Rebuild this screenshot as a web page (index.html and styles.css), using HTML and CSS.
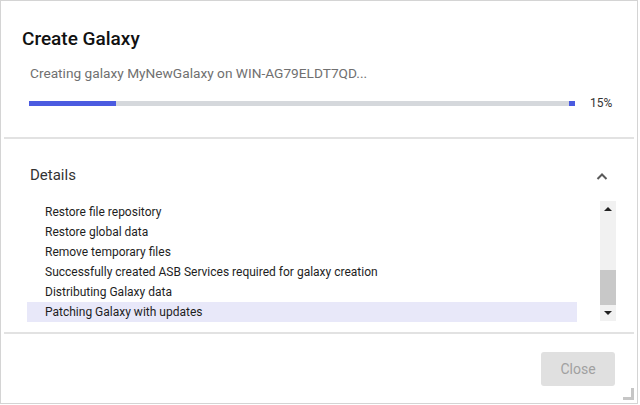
FILE: index.html
```html
<!DOCTYPE html>
<html lang="en">
<head>
    <meta charset="UTF-8">
    <meta name="viewport" content="width=device-width, initial-scale=1.0">
    <title>Create Galaxy</title>
    <link rel="stylesheet" href="styles.css">
</head>
<body>

    <div class="dialog">
        <div class="header">
            <h1>Create Galaxy</h1>
            <p class="status">Creating galaxy MyNewGalaxy on WIN-AG79ELDT7QD...</p>
            <div class="progress-row">
                <div class="progress-bar">
                    <div class="progress" style="width: 16%"></div>
                    <div class="progress-end"></div>
                </div>
                <span class="percent">15%</span>
            </div>
        </div>

        <div class="divider"></div>

        <div class="details">
            <div class="details-head">
                <span>Details</span>
                <svg class="chevron" width="12" height="8" viewBox="0 0 12 8">
                    <path d="M1.5 7 L6 2.5 L10.5 7" fill="none" stroke="#5a5a5a" stroke-width="2"/>
                </svg>
            </div>
            <div class="log-box">
                <ul class="log">
                    <li>Restore file repository</li>
                    <li>Restore global data</li>
                    <li>Remove temporary files</li>
                    <li>Successfully created ASB Services required for galaxy creation</li>
                    <li>Distributing Galaxy data</li>
                    <li class="selected">Patching Galaxy with updates</li>
                </ul>
                <div class="scrollbar">
                    <div class="scroll-btn"><span class="arrow-up"></span></div>
                    <div class="scroll-track"><div class="scroll-thumb"></div></div>
                    <div class="scroll-btn"><span class="arrow-down"></span></div>
                </div>
            </div>
        </div>

        <div class="divider"></div>

        <div class="footer">
            <button class="close-btn" disabled>Close</button>
        </div>

        <div class="grip"></div>
    </div>

</body>
</html>
```

FILE: styles.css
```css
body {
    margin: 0;
    font-family: Roboto, 'Liberation Sans', sans-serif;
    background: white;
}
.dialog {
    position: relative;
    width: 638px;
    height: 404px;
    box-sizing: border-box;
    border: 1px solid #d4d4d4;
    background: white;
}
.header {
    height: 136px;
    padding: 27px 0 0 21px;
    box-sizing: border-box;
}
h1 {
    margin: 0;
    font-size: 19px;
    line-height: 22px;
    font-weight: 500;
    color: #111;
}
.status {
    margin: 15px 0 0 8px;
    font-size: 13.7px;
    line-height: 16px;
    color: #707070;
}
.progress-row {
    display: flex;
    align-items: center;
    height: 16px;
    margin: 14px 0 0 7px;
}
.progress-bar {
    display: flex;
    width: 546px;
    height: 5px;
    background: #d5d8dc;
}
.progress {
    height: 100%;
    background: #4b5be0;
}
.progress-end {
    width: 6px;
    height: 100%;
    margin-left: auto;
    background: #4b5be0;
}
.percent {
    margin-left: 15px;
    font-size: 12px;
    color: #333;
}
.divider {
    height: 2px;
    margin: 0 3px;
    background: #e2e2e2;
}
.details {
    height: 193px;
    padding-top: 27px;
    box-sizing: border-box;
}
.details-head {
    display: flex;
    align-items: center;
    justify-content: space-between;
    height: 18px;
    padding: 0 29px;
    font-size: 15px;
    color: #333;
}
.chevron {
    margin-top: 2px;
}
.log-box {
    display: flex;
    margin: 17px 21px 0 26px;
    height: 121px;
}
.log {
    list-style: none;
    margin: 1px 0 0 0;
    padding: 0;
    width: 550px;
}
.log li {
    height: 20px;
    line-height: 20px;
    padding-left: 18px;
    font-size: 12px;
    color: #1e1e1e;
    white-space: nowrap;
}
.log li.selected {
    background: #e8e8f9;
}
.scrollbar {
    display: flex;
    flex-direction: column;
    width: 16px;
    height: 120px;
    margin-left: auto;
    background: #f1f1f1;
}
.scroll-btn {
    display: flex;
    align-items: center;
    justify-content: center;
    height: 16px;
}
.arrow-up {
    width: 0;
    height: 0;
    border-left: 4px solid transparent;
    border-right: 4px solid transparent;
    border-bottom: 4px solid #222;
}
.arrow-down {
    width: 0;
    height: 0;
    border-left: 4px solid transparent;
    border-right: 4px solid transparent;
    border-top: 4px solid #222;
}
.scroll-track {
    flex: 1;
    display: flex;
    flex-direction: column;
    justify-content: flex-end;
}
.scroll-thumb {
    height: 35px;
    background: #c8c8c8;
}
.footer {
    display: flex;
    justify-content: flex-end;
    padding: 18px 22px 0 0;
}
.close-btn {
    width: 74px;
    height: 34px;
    border: none;
    border-radius: 3px;
    background: #e0e0e0;
    color: #a0a0a0;
    font-family: Roboto, 'Liberation Sans', sans-serif;
    font-size: 14px;
}
.grip {
    position: absolute;
    right: 3px;
    bottom: 3px;
    width: 8px;
    height: 9px;
    border-right: 3px solid #c6c6c6;
    border-bottom: 3px solid #c6c6c6;
}
```
